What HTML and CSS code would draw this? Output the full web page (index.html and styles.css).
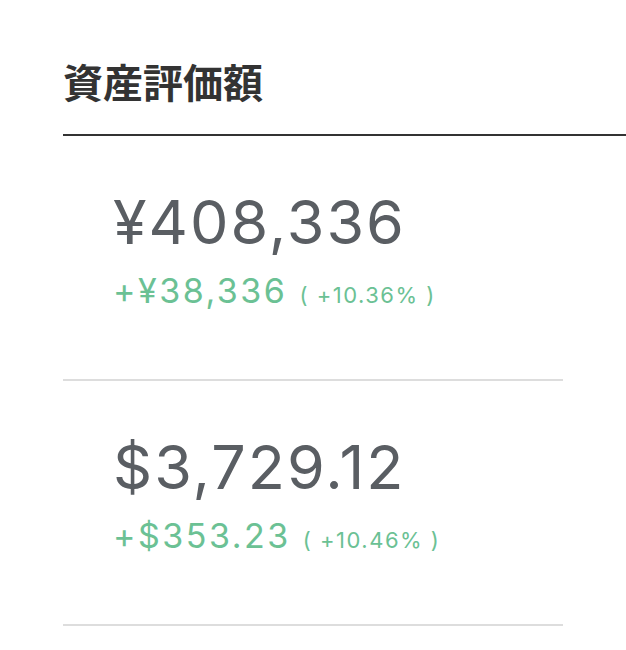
FILE: index.html
```html
<!DOCTYPE html>
<html lang="ja">
<head>
    <meta charset="UTF-8">
    <meta name="viewport" content="width=device-width, initial-scale=1.0">
    <title>資産評価額</title>
    <link rel="stylesheet" href="styles.css">
</head>
<body>
    <div class="container">
        <h2 class="title">資産評価額</h2>

        <div class="asset">
            <div class="amount">¥408,336</div>
            <div class="gain">+¥38,336 <span class="rate">( +10.36% )</span></div>
        </div>

        <div class="asset">
            <div class="amount">$3,729.12</div>
            <div class="gain">+$353.23 <span class="rate">( +10.46% )</span></div>
        </div>
    </div>
</body>
</html>
```

FILE: styles.css
```css
body {
    margin: 0;
    background: #fff;
    font-family: "Noto Sans CJK JP", sans-serif;
}
.container {
    padding: 48px 0 0 63px;
}
.title {
    margin: 0;
    font-size: 40px;
    font-weight: 700;
    line-height: 1;
    color: #333;
    padding: 13px 0 33px 0;
    border-bottom: 2px solid #333;
}
.asset {
    width: 450px;
    padding: 51px 0 64px 50px;
    border-bottom: 2px solid #ddd;
    font-family: Inter, "Noto Sans CJK JP", sans-serif;
}
.amount {
    font-size: 61px;
    font-weight: 400;
    line-height: 70px;
    letter-spacing: 2px;
    color: #5a5e63;
}
.gain {
    margin-top: 14px;
    font-size: 34px;
    font-weight: 400;
    line-height: 40px;
    letter-spacing: 2.5px;
    color: #6bc194;
}
.rate {
    font-size: 22px;
    letter-spacing: 1.5px;
}
```
